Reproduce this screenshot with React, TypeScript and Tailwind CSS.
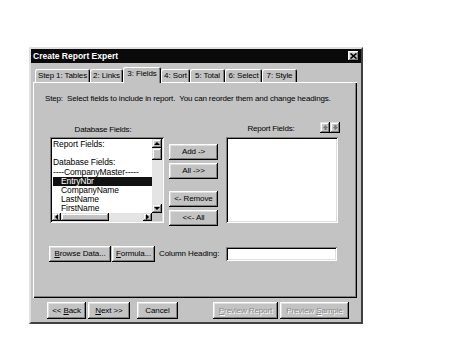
import React from "react";

const raised =
  "bg-[#c3c3c3] shadow-[inset_-1px_-1px_0_#000,inset_1px_1px_0_#fff,inset_-2px_-2px_0_#808080,inset_2px_2px_0_#dfdfdf]";
const sunken =
  "bg-white shadow-[inset_1px_1px_0_#808080,inset_-1px_-1px_0_#fff,inset_2px_2px_0_#000,inset_-2px_-2px_0_#dfdfdf]";

function Btn({ w, h = 17, children, disabled }: { w: string; h?: number; children: React.ReactNode; disabled?: boolean }) {
  return (
    <div
      className={`${raised} ${w} flex items-center justify-center text-[8px] tracking-[-0.1px] leading-none whitespace-nowrap ${
        disabled ? "text-[#8a8a8a] [text-shadow:1px_1px_0_#fff]" : "text-black"
      }`}
      style={{ height: h }}
    >
      {children}
    </div>
  );
}

function Tri({ dir }: { dir: "up" | "down" | "left" | "right" }) {
  const pts =
    dir === "up" ? "0,3 3,0 6,3" : dir === "down" ? "0,0 6,0 3,3" : dir === "left" ? "3,0 3,6 0,3" : "0,0 0,6 3,3";
  const w = dir === "up" || dir === "down" ? 6 : 3;
  const h = dir === "up" || dir === "down" ? 3 : 6;
  return (
    <svg width={w} height={h} viewBox={`0 0 ${w} ${h}`}>
      <polygon points={pts} fill="#000" />
    </svg>
  );
}

const sbBtn =
  "bg-[#c3c3c3] shadow-[inset_-1px_-1px_0_#000,inset_1px_1px_0_#dfdfdf,inset_-2px_-2px_0_#808080,inset_2px_2px_0_#fff] flex items-center justify-center";

export default function App() {
  const tabs = [
    { t: "Step 1: Tables", w: "w-[55px]" },
    { t: "2: Links", w: "w-[33px]" },
    { t: "3: Fields", w: "w-[38px]", sel: true },
    { t: "4: Sort", w: "w-[29px]" },
    { t: "5: Total", w: "w-[35px]" },
    { t: "6: Select", w: "w-[37px]" },
    { t: "7: Style", w: "w-[35px]" },
  ];
  return (
    <div className="w-[460px] h-[345px] bg-white pt-[47px] pl-[29px] font-['Liberation_Sans',Arial,sans-serif] text-black">
      <div className="w-[334px] h-[277px] bg-[#c3c3c3] border-2 border-t-[#dfdfdf] border-l-[#dfdfdf] border-r-[#404040] border-b-[#404040] flex flex-col">
        {/* title bar */}
        <div className="h-[14px] bg-[#0a0a0a] flex items-center justify-between pl-[2px] pr-[2px]">
          <span className="text-white font-bold text-[8.5px] leading-none">Create Report Expert</span>
          <div className={`${raised} w-[11px] h-[10px] flex items-center justify-center`}>
            <svg width="7" height="6" viewBox="0 0 7 6">
              <path d="M0.5 0.5 L6.5 5.5 M6.5 0.5 L0.5 5.5" stroke="#000" strokeWidth="1.6" />
            </svg>
          </div>
        </div>

        {/* tabs + panel */}
        <div className="mt-[4px] ml-[2px] flex flex-col">
          <div className="h-[15px] flex items-end pl-[2px]">
            {tabs.map((tb) => (
              <div
                key={tb.t}
                className={`${tb.w} ${
                  tb.sel ? "h-[16px] -mb-[1px] relative z-10 pb-[2px]" : "h-[13px]"
                } bg-[#c3c3c3] rounded-t-[2px] shadow-[inset_1px_1px_0_#fff,inset_-1px_0_0_#000,inset_-2px_0_0_#808080] flex items-center justify-center text-[8px] tracking-[-0.1px] leading-none whitespace-nowrap`}
              >
                {tb.t}
              </div>
            ))}
          </div>
          <div className="w-[324px] h-[216px] bg-[#c3c3c3] shadow-[inset_1px_1px_0_#fff,inset_-1px_-1px_0_#000,inset_-2px_-2px_0_#808080] flex flex-col">
            <div className="mt-[11px] pl-[12px] h-[12px] leading-[12px] text-[8px] tracking-[-0.15px] whitespace-nowrap">
              Step:&nbsp; Select fields to include in report.&nbsp; You can reorder them and change headings.
            </div>

            <div className="mt-[17px] pl-[17px] flex">
              {/* left column */}
              <div className="w-[114px] flex flex-col">
                <div className="h-[15px] flex items-center justify-center pr-[8px] text-[8px] tracking-[-0.2px] leading-none">
                  Database Fields:
                </div>
                <div className={`${sunken} h-[86px] p-[2px] flex flex-col`}>
                  <div className="flex-1 flex min-h-0">
                    <div className="flex-1 pt-[1px] pl-[1px] text-[8.5px] tracking-[-0.1px] leading-[9.2px] whitespace-nowrap overflow-hidden">
                      <div className="h-[9.2px]">Report Fields:</div>
                      <div className="h-[9.2px]"></div>
                      <div className="h-[9.2px]">Database Fields:</div>
                      <div className="h-[9.2px]">----CompanyMaster-----</div>
                      <div className="h-[9.2px] bg-[#111] text-white pl-[8px]">EntryNbr</div>
                      <div className="h-[9.2px] pl-[8px]">CompanyName</div>
                      <div className="h-[9.2px] pl-[8px]">LastName</div>
                      <div className="h-[9.2px] pl-[8px]">FirstName</div>
                    </div>
                    <div className="w-[10px] flex flex-col bg-[#e4e4e4]">
                      <div className={`${sbBtn} h-[9px]`}>
                        <Tri dir="up" />
                      </div>
                      <div className={`${sbBtn} h-[12px]`}></div>
                      <div className="flex-1"></div>
                      <div className={`${sbBtn} h-[9px]`}>
                        <Tri dir="down" />
                      </div>
                    </div>
                  </div>
                  <div className="h-[8px] flex">
                    <div className="flex-1 flex bg-[#e4e4e4]">
                      <div className={`${sbBtn} w-[9px]`}>
                        <Tri dir="left" />
                      </div>
                      <div className={`${sbBtn} w-[48px]`}></div>
                      <div className="flex-1"></div>
                      <div className={`${sbBtn} w-[9px]`}>
                        <Tri dir="right" />
                      </div>
                    </div>
                    <div className="w-[10px] bg-[#c3c3c3]"></div>
                  </div>
                </div>
              </div>

              {/* middle buttons */}
              <div className="ml-[5px] w-[49px] pt-[22px] flex flex-col">
                <Btn w="w-[49px]" h={16}>Add -&gt;</Btn>
                <div className="mt-[3px]">
                  <Btn w="w-[49px]" h={16}>All -&gt;&gt;</Btn>
                </div>
                <div className="mt-[12px]">
                  <Btn w="w-[49px]" h={16}>&lt;- Remove</Btn>
                </div>
                <div className="mt-[3px]">
                  <Btn w="w-[49px]" h={16}>&lt;&lt;- All</Btn>
                </div>
              </div>

              {/* right column */}
              <div className="ml-[8px] w-[112px] flex flex-col">
                <div className="h-[15px] flex items-start">
                  <div className="flex-1 h-[12px] flex items-center justify-center pl-[4px] pr-[8px] mt-[1px] text-[8px] tracking-[-0.2px] leading-none">
                    Report Fields:
                  </div>
                  <div className="flex mr-[-2px] bg-[#c3c3c3] shadow-[inset_1px_1px_0_#808080,inset_-1px_-1px_0_#fff]">
                    <div className={`${sbBtn} w-[10px] h-[11px]`}>
                      <svg width="5" height="5" viewBox="0 0 5 5">
                        <polygon points="0,3 2.5,0 5,3" fill="#777" />
                        <rect x="1.5" y="3" width="2" height="2" fill="#777" />
                      </svg>
                    </div>
                    <div className={`${sbBtn} w-[10px] h-[11px]`}>
                      <svg width="5" height="5" viewBox="0 0 5 5">
                        <rect x="1.5" y="0" width="2" height="2" fill="#777" />
                        <polygon points="0,2 5,2 2.5,5" fill="#777" />
                      </svg>
                    </div>
                  </div>
                </div>
                <div className={`${sunken} h-[86px]`}></div>
              </div>
            </div>

            {/* bottom row */}
            <div className="mt-[20px] pl-[16px] flex items-center">
              <Btn w="w-[62px]" h={16}>
                <span>
                  <u>B</u>rowse Data...
                </span>
              </Btn>
              <div className="ml-[1px]">
                <Btn w="w-[43px]" h={16}>
                  <span>
                    <u>F</u>ormula...
                  </span>
                </Btn>
              </div>
              <span className="ml-[4px] text-[8px] tracking-[-0.1px] leading-none whitespace-nowrap">Column Heading:</span>
              <div className="flex-1"></div>
              <div className={`${sunken} w-[111px] h-[14px] mr-[20px]`}></div>
            </div>
          </div>
        </div>

        {/* bottom buttons */}
        <div className="mt-[4px] pl-[16px] flex">
          <Btn w="w-[39px]">
            <span>
              &lt;&lt; <u>B</u>ack
            </span>
          </Btn>
          <div className="ml-[2px]">
            <Btn w="w-[42px]">
              <span>
                <u>N</u>ext &gt;&gt;
              </span>
            </Btn>
          </div>
          <div className="ml-[7px]">
            <Btn w="w-[41px]">Cancel</Btn>
          </div>
          <div className="ml-[35px]">
            <Btn w="w-[65px]" disabled>
              <span>
                <u>P</u>review Report
              </span>
            </Btn>
          </div>
          <div className="ml-[2px]">
            <Btn w="w-[69px]" disabled>
              <span>
                Preview <u>S</u>ample
              </span>
            </Btn>
          </div>
        </div>
      </div>
    </div>
  );
}
